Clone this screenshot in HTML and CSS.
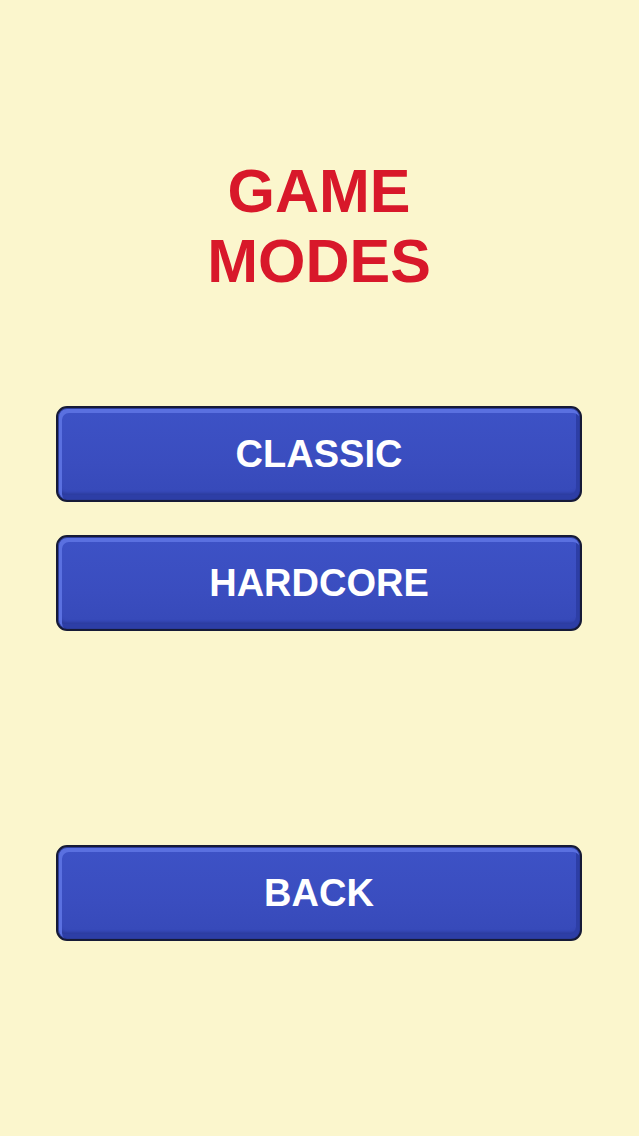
FILE: index.html
```html
<!DOCTYPE html>
<html lang="en">

<head>
    <meta charset="UTF-8">
    <meta name="viewport" content="width=device-width, initial-scale=1.0">
    <title>Game Modes</title>
    <link rel="stylesheet" href="styles.css">
</head>

<body>
    <div class="screen">
        <h1 class="title">GAME<br>MODES</h1>

        <div class="modes">
            <button class="btn">CLASSIC</button>
            <button class="btn">HARDCORE</button>
        </div>

        <button class="btn back">BACK</button>
    </div>
</body>

</html>
```

FILE: styles.css
```css
* {
    margin: 0;
    padding: 0;
    box-sizing: border-box;
}

html,
body {
    width: 100%;
    height: 100%;
}

body {
    background: #fbf6cd;
    font-family: "Liberation Sans", Arial, sans-serif;
}

.screen {
    display: flex;
    flex-direction: column;
    align-items: center;
    padding: 156px 57px 0 56px;
}

.title {
    color: #d8182a;
    font-size: 61px;
    line-height: 70px;
    font-weight: bold;
    text-align: center;
}

.modes {
    width: 100%;
    display: flex;
    flex-direction: column;
    gap: 33px;
    margin-top: 110px;
}

.btn {
    width: 100%;
    height: 96px;
    display: flex;
    justify-content: center;
    align-items: center;
    border: 2px solid #161a36;
    border-radius: 11px;
    background: linear-gradient(#3d52c6, #3a4dbf 60%, #3649b8);
    box-shadow:
        inset 0 0 0 1px #2a3a9a,
        inset 2px 3px 0 2px #5a70e0,
        inset -2px -3px 0 2px #2d3ea6,
        inset 0 -6px 3px 1px #2c3c9e;
    color: #fff;
    font-family: "Liberation Sans", Arial, sans-serif;
    font-size: 38px;
    font-weight: bold;
    cursor: pointer;
}

.back {
    margin-top: 214px;
}
```
